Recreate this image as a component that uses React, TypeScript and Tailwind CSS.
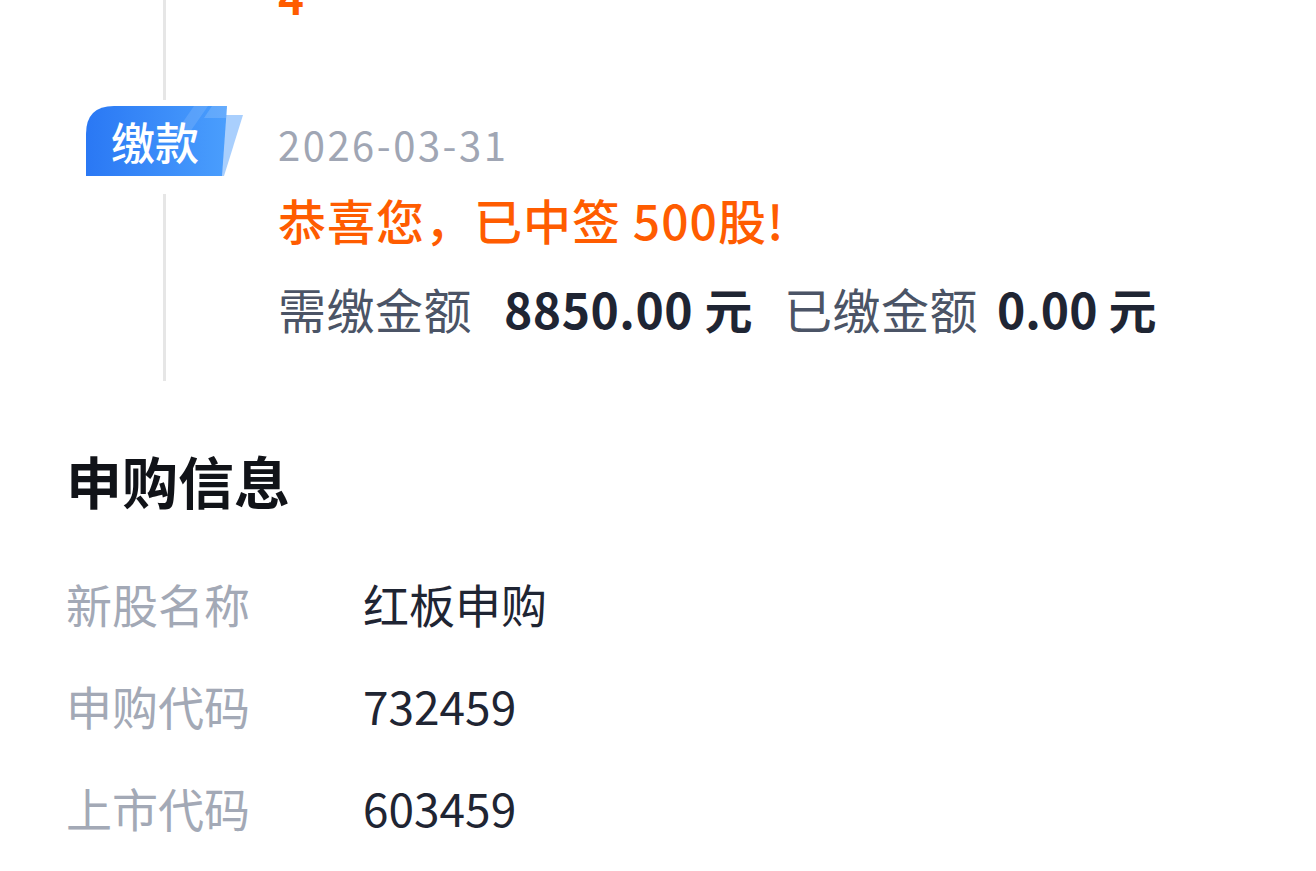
export default function App() {
  return (
    <div className="w-[1316px] h-[871px] overflow-hidden bg-white font-['Noto_Sans_CJK_SC','Noto_Sans',sans-serif]">
      {/* timeline */}
      <div className="-mt-[26px] ml-[86px]">
        {/* previous item (scrolled off) */}
        <div className="flex">
          <div className="w-[192px] shrink-0 flex">
            <div className="ml-[77px] w-[3px] bg-[#e6e6e6]" />
          </div>
          <div className="text-[44px] leading-[44px] font-bold text-[#ff5c00]">4</div>
        </div>

        {/* payment item */}
        <div className="flex">
          <div className="w-[192px] shrink-0 flex flex-col">
            <div className="ml-[77px] w-[3px] h-[82px] bg-[#e6e6e6]" />
            <PayBadge />
            <div className="ml-[77px] w-[3px] mt-[18px] flex-1 bg-[#e6e6e6]" />
          </div>
          <div className="pt-[106px] pb-[45px]">
            <div className="text-[40px] leading-[40px] tracking-[2.5px] text-[#a0a6b4]">2026-03-31</div>
            <div className="mt-[27px] text-[48px] leading-[56px] tracking-[1px] font-medium text-[#ff5c00]">
              恭喜您，已中签 500股!
            </div>
            <div className="mt-[33px] flex items-center text-[48px] leading-[56px] whitespace-nowrap">
              <span className="text-[#4b5466] tracking-[0.5px]">需缴金额</span>
              <span className="ml-[32px] font-bold tracking-[0.5px] text-[#1f2533]">8850.00 元</span>
              <span className="ml-[31px] text-[#4b5466] tracking-[0.5px]">已缴金额</span>
              <span className="ml-[19px] font-bold text-[#1f2533]">0.00 元</span>
            </div>
          </div>
        </div>
      </div>

      {/* subscription info */}
      <div className="pl-[66px] mt-[69px]">
        <h2 className="text-[56px] leading-[60px] font-bold text-[#111318]">申购信息</h2>
        <div className="mt-[65px] flex flex-col gap-[46px] text-[46px] leading-[56px]">
          <InfoRow label="新股名称" value="红板申购" />
          <InfoRow label="申购代码" value="732459" />
          <InfoRow label="上市代码" value="603459" />
        </div>
      </div>
    </div>
  );
}

function PayBadge() {
  return (
    <div className="relative mt-[6px] w-[157px] h-[70px] flex items-center">
      <svg className="absolute inset-0" width="157" height="70" viewBox="0 0 157 70">
        <defs>
          <linearGradient id="badgeGrad" x1="0" y1="0" x2="1" y2="0">
            <stop offset="0" stopColor="#2a78f4" />
            <stop offset="1" stopColor="#4a9efd" />
          </linearGradient>
        </defs>
        <polygon points="128,9 157,9 138,70 118,70" fill="#a9cffd" />
        <path d="M0 70 L0 28 Q0 0 28 0 L141 0 L136 70 Z" fill="url(#badgeGrad)" />
        <polygon points="108,0 122,0 104,26 90,26" fill="#ffffff" opacity="0.12" />
        <polygon points="126,0 141,0 140,12 118,12" fill="#ffffff" opacity="0.15" />
      </svg>
      <span className="relative ml-[25px] text-[44px] leading-[50px] font-medium text-white">缴款</span>
    </div>
  );
}

function InfoRow({ label, value }: { label: string; value: string }) {
  return (
    <div className="flex">
      <div className="w-[297px] shrink-0 text-[#a3a9b6]">{label}</div>
      <div className="text-[#1f2533]">{value}</div>
    </div>
  );
}
